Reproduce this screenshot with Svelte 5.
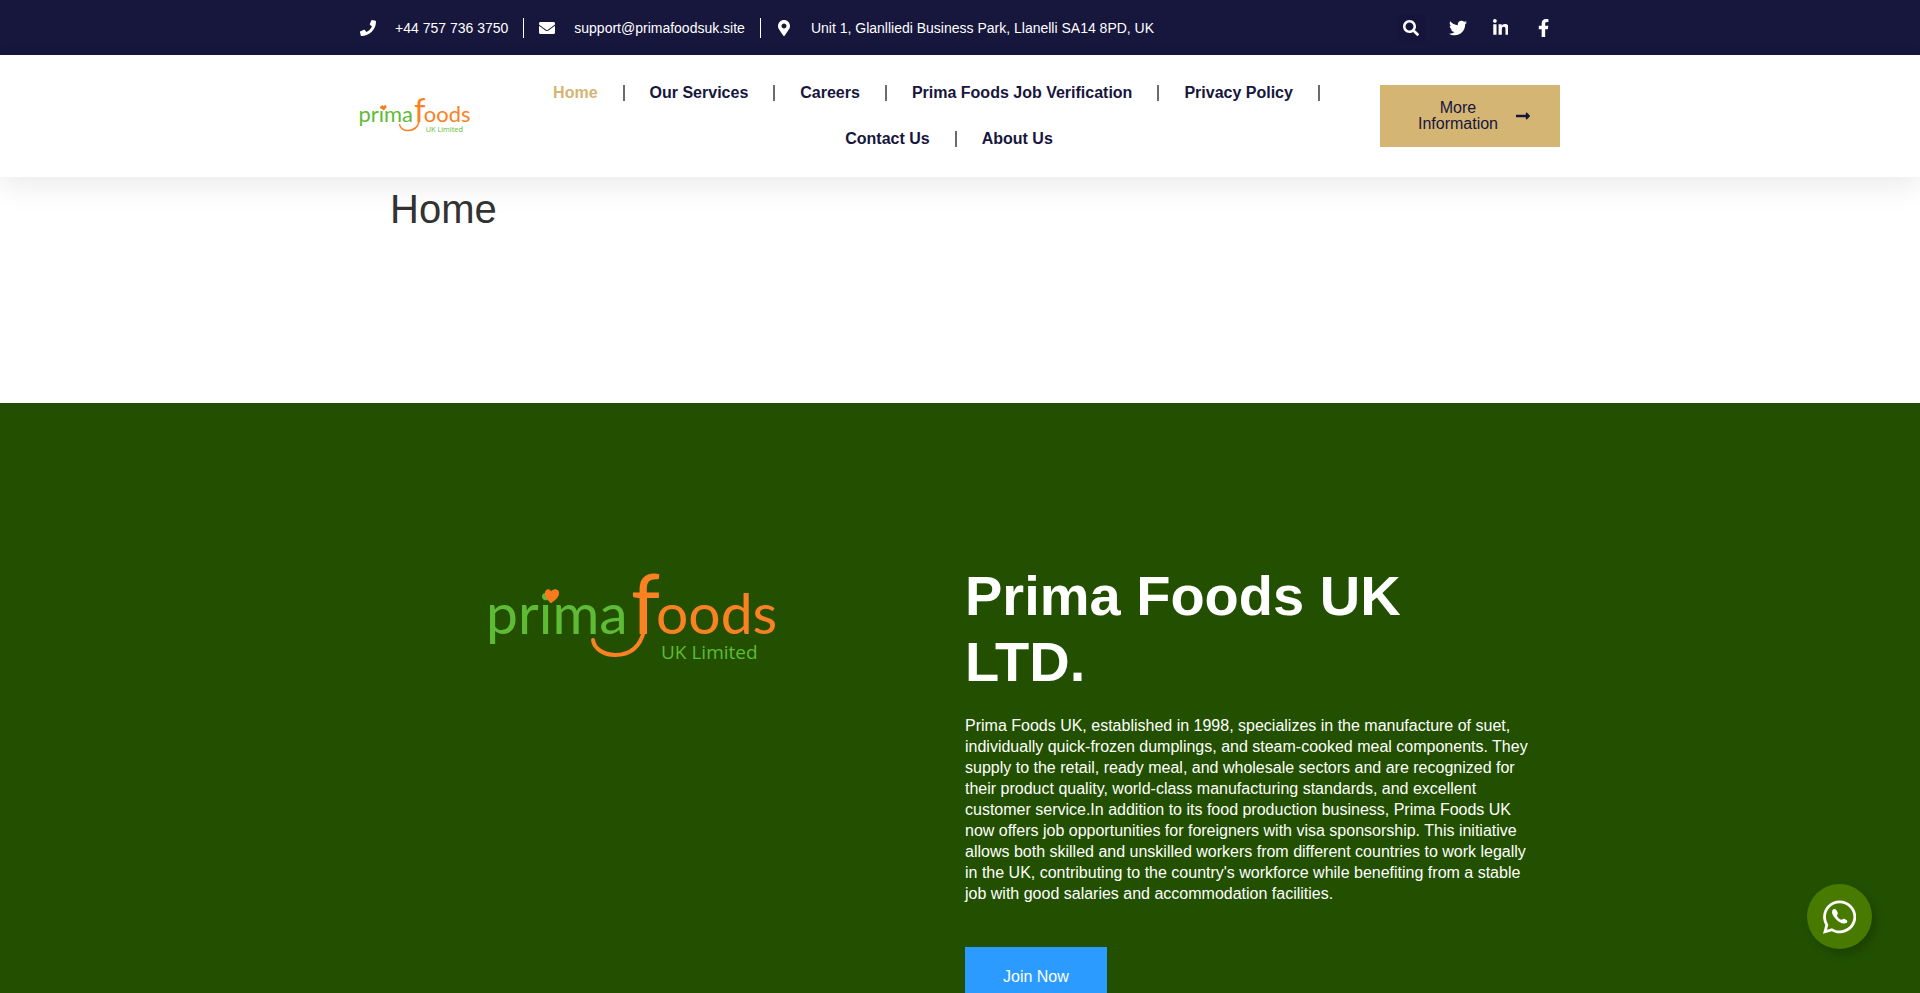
<script>
  const contacts = [
    { icon: 'phone', label: '+44 757 736 3750', href: 'tel:+447577363750' },
    { icon: 'mail', label: 'support@primafoodsuk.site', href: 'mailto:support@primafoodsuk.site' },
    { icon: 'pin', label: 'Unit 1, Glanlliedi Business Park, Llanelli SA14 8PD, UK', href: '#address' },
  ];

  const socials = [
    { icon: 'twitter', title: 'Twitter' },
    { icon: 'linkedin', title: 'LinkedIn' },
    { icon: 'facebook', title: 'Facebook' },
  ];

  const menu = [
    'Home',
    'Our Services',
    'Careers',
    'Prima Foods Job Verification',
    'Privacy Policy',
    'Contact Us',
    'About Us',
  ];
  let active = $state('Home');

  const icons = {
    phone: {
      w: 512,
      d: 'M493.4 24.6l-104-24c-11.3-2.6-22.9 3.3-27.5 13.9l-48 112c-4.2 9.8-1.4 21.3 6.9 28l60.6 49.6c-36 76.7-98.9 140.5-177.2 177.2l-49.6-60.6c-6.8-8.3-18.2-11.1-28-6.9l-112 48C3.9 366.5-2 378.1.6 389.4l24 104C27.1 504.2 36.7 512 48 512c256.1 0 464-207.5 464-464 0-11.2-7.7-20.9-18.6-23.4z',
    },
    mail: {
      w: 512,
      d: 'M502.3 190.8c3.9-3.1 9.7-.2 9.7 4.7V400c0 26.5-21.5 48-48 48H48c-26.5 0-48-21.5-48-48V195.6c0-5 5.7-7.8 9.7-4.7 22.4 17.4 52.1 39.5 154.1 113.6 21.1 15.4 56.7 47.8 92.2 47.6 35.7.3 72-32.8 92.3-47.6 102-74.1 131.6-96.3 154-113.7zM256 320c23.2.4 56.6-29.2 73.4-41.4 132.7-96.3 142.8-104.7 173.4-128.7 5.8-4.5 9.2-11.5 9.2-18.9v-19c0-26.5-21.5-48-48-48H48c-26.5 0-48 21.5-48 48v19c0 7.4 3.4 14.3 9.2 18.9 30.6 23.9 40.7 32.4 173.4 128.7 16.8 12.2 50.2 41.8 73.4 41.4z',
    },
    pin: {
      w: 384,
      d: 'M172.268 501.67C26.97 291.031 0 269.413 0 192 0 85.961 85.961 0 192 0s192 85.961 192 192c0 77.413-26.97 99.031-172.268 309.67-9.535 13.774-29.93 13.773-39.464 0zM192 272c44.183 0 80-35.817 80-80s-35.817-80-80-80-80 35.817-80 80 35.817 80 80 80z',
    },
    search: {
      w: 512,
      d: 'M505 442.7L405.3 343c-4.5-4.5-10.6-7-17-7H372c27.6-35.3 44-79.7 44-128C416 93.1 322.9 0 208 0S0 93.1 0 208s93.1 208 208 208c48.3 0 92.7-16.4 128-44v16.3c0 6.4 2.5 12.5 7 17l99.7 99.7c9.4 9.4 24.6 9.4 33.9 0l28.3-28.3c9.4-9.4 9.4-24.6.1-34zM208 336c-70.7 0-128-57.2-128-128 0-70.7 57.2-128 128-128 70.7 0 128 57.2 128 128 0 70.7-57.2 128-128 128z',
    },
    twitter: {
      w: 512,
      d: 'M459.37 151.716c.325 4.548.325 9.097.325 13.645 0 138.72-105.583 298.558-298.558 298.558-59.452 0-114.68-17.219-161.137-47.106 8.447.974 16.568 1.299 25.34 1.299 49.055 0 94.213-16.568 130.274-44.832-46.132-.975-84.792-31.188-98.112-72.772 6.498.974 12.995 1.624 19.818 1.624 9.421 0 18.843-1.3 27.614-3.573-48.081-9.747-84.143-51.98-84.143-102.985v-1.299c13.969 7.797 30.214 12.67 47.431 13.319-28.264-18.843-46.781-51.005-46.781-87.391 0-19.492 5.197-37.36 14.294-52.954 51.655 63.675 129.3 105.258 216.365 109.807-1.624-7.797-2.599-15.918-2.599-24.04 0-57.828 46.782-104.934 104.934-104.934 30.213 0 57.502 12.67 76.67 33.137 23.715-4.548 46.456-13.32 66.599-25.34-7.798 24.366-24.366 44.833-46.132 57.827 21.117-2.273 41.584-8.122 60.426-16.243-14.292 20.791-32.161 39.308-52.628 54.253z',
    },
    linkedin: {
      w: 448,
      d: 'M100.28 448H7.4V148.9h92.88zM53.79 108.1C24.09 108.1 0 83.5 0 53.8a53.79 53.79 0 0 1 107.58 0c0 29.7-24.1 54.3-53.79 54.3zM447.9 448h-92.68V302.4c0-34.7-.7-79.2-48.29-79.2-48.29 0-55.69 37.7-55.69 76.7V448h-92.78V148.9h89.08v40.8h1.3c12.4-23.5 42.69-48.3 87.88-48.3 94 0 111.28 61.9 111.28 142.3V448z',
    },
    facebook: {
      w: 320,
      d: 'M279.14 288l14.22-92.66h-88.91v-60.13c0-25.35 12.42-50.06 52.24-50.06h40.42V6.26S260.43 0 225.36 0c-73.22 0-121.08 44.38-121.08 124.72v70.62H22.89V288h81.39v224h100.17V288z',
    },
    arrow: {
      w: 448,
      d: 'M313.941 216H12c-6.627 0-12 5.373-12 12v56c0 6.627 5.373 12 12 12h301.941v46.059c0 21.382 25.851 32.09 40.971 16.971l86.059-86.059c9.373-9.373 9.373-24.569 0-33.941l-86.059-86.059c-15.119-15.119-40.971-4.411-40.971 16.971V216z',
    },
    whatsapp: {
      w: 448,
      d: 'M380.9 97.1C339 55.1 283.2 32 223.9 32c-122.4 0-222 99.6-222 222 0 39.1 10.2 77.3 29.6 111L0 480l117.7-30.9c32.4 17.7 68.9 27 106.1 27h.1c122.3 0 224.1-99.6 224.1-222 0-59.3-25.2-115-67.1-157zm-157 341.6c-33.2 0-65.7-8.9-94-25.7l-6.7-4-69.8 18.3L72 359.2l-4.4-7c-18.5-29.4-28.2-63.3-28.2-98.2 0-101.7 82.8-184.5 184.6-184.5 49.3 0 95.6 19.2 130.4 54.1 34.8 34.9 56.2 81.2 56.1 130.5 0 101.8-84.9 184.6-186.6 184.6z',
    },
  };
</script>

{#snippet icon(name)}
  <svg class="icon icon--{name}" viewBox="0 0 {icons[name].w} 512" aria-hidden="true">
    <path d={icons[name].d} />
    {#if name === 'whatsapp'}
      <!-- Handset -->
      <path d="M156 148c-22-2-36 18-34 46 4 52 86 144 162 150 24 2 44-10 44-30 0-14-34-36-52-36-12 0-18 16-30 16-20-4-54-38-58-56 0-12 12-18 12-30 0-18-24-58-44-60z" />
    {/if}
  </svg>
{/snippet}

{#snippet logo()}
  <svg class="logo" viewBox="0 0 286 88" role="img" aria-label="Prima Foods UK Limited">
    <text class="logo__word logo__word--green" x="-4" y="61" font-size="57">prima</text>
    <text class="logo__word logo__word--orange" x="141" y="61" font-size="83">f</text>
    <text class="logo__word logo__word--orange" x="166" y="61" font-size="57">oods</text>
    <path class="logo__heart" d="M61 29C57 25 55 22 56 19c1-3 4-2 5 1 2-3 6-4 7-1 1 4-3 7-7 10z" />
    <path class="logo__tail" d="M154 58C150 74 140 82 125 82 113 82 104 75 103 67" />
    <text class="logo__sub" x="171" y="86" font-size="19">UK Limited</text>
  </svg>
{/snippet}

<div class="page">
  <div class="topbar">
    <div class="container topbar__inner">
      <ul class="contacts">
        {#each contacts as item}
          <li class="contacts__item">
            <a class="contacts__link" href={item.href}>
              <span class="contacts__icon">{@render icon(item.icon)}</span>
              <span>{item.label}</span>
            </a>
          </li>
        {/each}
      </ul>
      <div class="topbar__right">
        <button class="search" aria-label="Search">{@render icon('search')}</button>
        <div class="socials">
          {#each socials as s}
            <a class="socials__link" href="#{s.icon}" aria-label={s.title}>{@render icon(s.icon)}</a>
          {/each}
        </div>
      </div>
    </div>
  </div>

  <header class="header">
    <div class="container header__inner">
      <a class="header__logo" href="#home" aria-label="Prima Foods">{@render logo()}</a>
      <nav>
        <ul class="menu">
          {#each menu as item}
            <li class="menu__item">
              <a
                class="menu__link"
                class:menu__link--active={active === item}
                href="#{item.toLowerCase().replaceAll(' ', '-')}"
                onclick={() => (active = item)}
              >{item}</a>
            </li>
          {/each}
        </ul>
      </nav>
      <a class="more" href="#more">
        <span class="more__text">More Information</span>
        {@render icon('arrow')}
      </a>
    </div>
  </header>

  <main>
    <div class="content title-row">
      <h1 class="title">Home</h1>
    </div>

    <section class="hero">
      <div class="content hero__inner">
        <div class="hero__logo">{@render logo()}</div>
        <div>
          <h2 class="hero__title">Prima Foods UK LTD.</h2>
          <p class="hero__text">
            Prima Foods UK, established in 1998, specializes in the manufacture of suet, individually
            quick-frozen dumplings, and steam-cooked meal components. They supply to the retail, ready
            meal, and wholesale sectors and are recognized for their product quality, world-class
            manufacturing standards, and excellent customer service.In addition to its food production
            business, Prima Foods UK now offers job opportunities for foreigners with visa sponsorship.
            This initiative allows both skilled and unskilled workers from different countries to work
            legally in the UK, contributing to the country's workforce while benefiting from a stable job
            with good salaries and accommodation facilities.
          </p>
          <a class="join" href="#join">Join Now</a>
        </div>
      </div>
    </section>
  </main>

  <a class="chat" href="#whatsapp" aria-label="Chat on WhatsApp">{@render icon('whatsapp')}</a>
</div>

<style>
  :global(body) { background: #fff; }

  .page {
    font-family: "Liberation Sans", Arial, sans-serif;
    font-size: 16px;
    color: #333;
  }
  .page a { text-decoration: none; }
  ul { list-style: none; margin: 0; padding: 0; }

  .container { max-width: 1200px; margin: 0 auto; }
  .content { max-width: 1140px; margin: 0 auto; }

  .icon { display: block; height: 16px; fill: currentColor; }

  /* Top bar */
  .topbar { background: #17163d; color: #fff; }
  .topbar__inner {
    display: flex;
    align-items: center;
    justify-content: space-between;
    min-height: 55px;
  }
  .contacts { display: flex; align-items: center; font-size: 14px; line-height: 20px; }
  .contacts__item + .contacts__item {
    margin-left: 15px;
    padding-left: 15px;
    border-left: 1px solid #fff;
  }
  .contacts__link { display: flex; align-items: center; gap: 19px; color: #fff; }
  .contacts__icon { display: flex; justify-content: center; width: 16px; }

  .topbar__right { display: flex; align-items: center; gap: 16px; }
  .search {
    display: flex;
    align-items: center;
    justify-content: center;
    width: 28px;
    height: 28px;
    padding: 0;
    border: none;
    background: #16143a;
    color: #fff;
    cursor: pointer;
  }
  .search .icon { height: 16px; }
  .socials { display: flex; gap: 10px; }
  .socials__link {
    display: flex;
    align-items: center;
    justify-content: center;
    width: 33px;
    height: 33px;
    color: #fff;
  }
  .socials__link .icon { height: 18px; }

  /* Header */
  .header {
    position: relative;
    background: #fff;
    box-shadow: 0 10px 27px 0 rgba(0, 0, 0, 0.08);
  }
  .header__inner {
    display: grid;
    grid-template-columns: 158px 1fr 180px;
    align-items: center;
    padding: 15px 0;
  }
  .header__logo { width: 110px; }

  .menu { display: flex; flex-wrap: wrap; justify-content: center; }
  .menu__item { display: flex; align-items: center; }
  .menu__item:not(:last-child)::after {
    content: '';
    width: 2px;
    height: 16px;
    margin: 0 25px;
    background: #6b6b6b;
  }
  .menu__link {
    padding: 13px 0;
    font-weight: 700;
    line-height: 20px;
    color: #17163d;
  }
  .menu__link:hover,
  .menu__link--active { color: #d4b573; }

  .more {
    display: flex;
    align-items: center;
    gap: 10px;
    padding: 15px 30px;
    background: #d4b573;
    color: #17163d;
    line-height: 16px;
    text-align: center;
  }
  .more__text { flex: 1; }

  /* Page title */
  .title-row { padding: 8px 0 170px; }
  .title { margin: 0; font-size: 40px; font-weight: 400; line-height: 48px; }

  /* Hero */
  .hero { padding: 160px 0; background: #225000; color: #fff; }
  .hero__inner { display: grid; grid-template-columns: 485fr 565fr; gap: 90px; }
  .hero__logo { width: 286px; margin: 10px auto 0; }
  .hero__title { margin: 0 0 20px; font-size: 56px; font-weight: 700; line-height: 66px; }
  .hero__text { margin: 0 0 43px; line-height: 21px; }
  .join {
    display: inline-block;
    padding: 22px 38px;
    background: #2b9bff;
    color: #fff;
    line-height: 16px;
  }

  /* Logo */
  .logo { display: block; width: 100%; overflow: visible; }
  .logo__word { font-family: Lato, "Open Sans", sans-serif; }
  .logo__word--green { fill: #5fbb35; }
  .logo__word--orange { fill: #fb8122; }
  .logo__heart { fill: #fb7a1e; stroke: #fb7a1e; stroke-width: 2; }
  .logo__tail { fill: none; stroke: #fb8122; stroke-width: 4; stroke-linecap: round; }
  .logo__sub { font-family: "Open Sans", "Noto Sans", sans-serif; fill: #5fbb35; }

  .chat {
    position: fixed;
    right: 48px;
    bottom: 44px;
    display: flex;
    align-items: center;
    justify-content: center;
    width: 65px;
    height: 65px;
    border-radius: 50%;
    background: #497a00;
    color: #fff;
    box-shadow: 4px 5px 10px rgba(0, 0, 0, 0.2);
  }
  .chat .icon { height: 38px; }
</style>
